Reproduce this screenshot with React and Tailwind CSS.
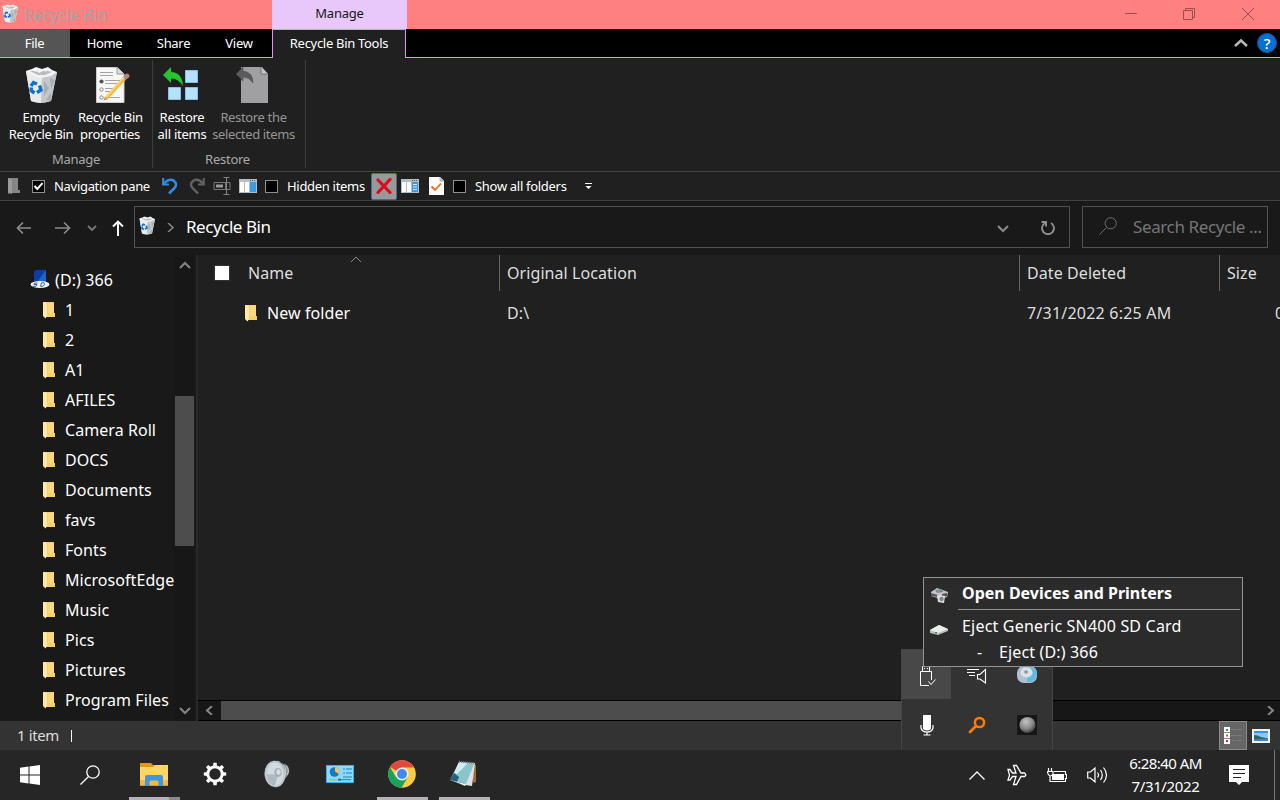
import React from 'react';

const folders = ['1', '2', 'A1', 'AFILES', 'Camera Roll', 'DOCS', 'Documents', 'favs', 'Fonts', 'MicrosoftEdge', 'Music', 'Pics', 'Pictures', 'Program Files'];

function BinIcon({ className }) {
  return (
    <svg className={className} viewBox="0 0 32 38" preserveAspectRatio="none">
      <path d="M1 5 L6 35 Q15 39 26 35 L32 6 Z" fill="#d5d8db" />
      <path d="M1 5 L6 35 L16 37 L17 11 Z" fill="#e9ebed" />
      <path d="M17 11 L16 37 L26 35 L32 6 Z" fill="#c3c7ca" />
      <path d="M19 15 L24 22 L19 30 Z M25 12 L30 14 L26 23 Z M21 34 L26 26 L26 35 Z" fill="#a9aeb2" />
      <path d="M1 5 L7 3 L11 1 L17 3 L23 1 L27 4 L32 6 L26 10 L16 12 L7 9 Z" fill="#f3f3f3" />
      <path d="M5 5 L11 4 L14 7 L20 4 L27 6 L20 9 L13 9 Z" fill="#b9bbbd" />
      <path d="M7 4 L11 3 L12 6 Z M18 3 L22 3 L21 6 Z" fill="#fff" />
      <g fill="none" stroke="#0c72d0" strokeWidth="3.4">
        <path d="M6 20 L8.5 16.5 L12 18" />
        <path d="M14.5 19.5 L16 24 L12 26.5" />
        <path d="M9.5 27 L6 24.5 L6.5 21.5" />
      </g>
    </svg>
  );
}

function FolderIcon({ className }) {
  return (
    <svg className={className} viewBox="0 0 13 18">
      <path d="M1 1 H12 V12 H13 V16 H3 L1 14 Z" fill="#f5d06c" />
      <path d="M1 1 L5 2 V15 L3.5 17.5 L1 15 Z" fill="#ffe9a9" />
      <path d="M6 2 H12 V12 H6 Z" fill="#fad97e" />
    </svg>
  );
}

function Chevron({ dir, className }) {
  const d = { up: 'M1 7 L6 2 L11 7', down: 'M1 2 L6 7 L11 2', left: 'M8 0 L3 4.5 L8 9', right: 'M4 0 L9 4.5 L4 9' }[dir];
  return (
    <svg className={className} viewBox="0 0 12 9" fill="none" stroke="currentColor">
      <path d={d} />
    </svg>
  );
}

function SearchIcon({ className }) {
  return (
    <svg className={className} viewBox="0 0 20 20" fill="none" stroke="currentColor">
      <circle cx="13" cy="7" r="6.2" />
      <path d="M8.5 11.5 L0.5 19.5" />
    </svg>
  );
}

function CheckBox({ checked }) {
  return (
    <div className="w-[13px] h-[13px] bg-black border border-[#8f8f8f] shrink-0">
      {checked && (
        <svg className="w-[11px] h-[11px] block" viewBox="0 0 11 11">
          <path d="M1.5 5 L4.3 8 L9.5 2.2" fill="none" stroke="#fff" strokeWidth="2" />
        </svg>
      )}
    </div>
  );
}

function TitleBar() {
  return (
    <div className="h-[29px] flex bg-[#ff8080] shrink-0">
      <div className="w-[272px] flex pl-[2px]">
        <BinIcon className="w-4 h-[19px] mt-1" />
        <span className="ml-[6px] text-[16px] leading-[30px] tracking-[-0.05px] text-[#a8a0a0]">Recycle Bin</span>
      </div>
      <div className="w-[135px] bg-[#e8c8fb] text-[#181818] text-[13px] leading-[27px] text-center tracking-[-0.2px]">Manage</div>
      <svg className="ml-auto w-[160px] h-[29px]" viewBox="0 0 160 29" fill="none" stroke="#9b4e4e">
        <path d="M5 13.5 H17" />
        <path d="M63.5 10.5 H72.5 V19.5 H63.5 Z M65.5 10 V8.5 H74.5 V17.5 H73" />
        <path d="M122 8 L134 20 M134 8 L122 20" />
      </svg>
    </div>
  );
}

function TabRow() {
  return (
    <div className="h-[29px] flex bg-black text-white text-[13px] leading-[28px] text-center shrink-0">
      <div className="w-[272px] flex border-b border-[#e391f5]">
        <div className="w-[69px] mr-px shadow-[1px_0_0_#555] bg-[#555] tracking-[-0.3px]">File</div>
        <div className="w-[69px] tracking-[-0.4px]">Home</div>
        <div className="w-[69px] tracking-[-0.3px]">Share</div>
        <div className="w-[62px] tracking-[-0.2px]">View</div>
      </div>
      <div className="w-[134px] bg-[#202020] border-x border-t border-[#e391f5] leading-[27px] tracking-[-0.3px]">Recycle Bin Tools</div>
      <div className="flex-1 flex items-center justify-end border-b border-[#e391f5]">
        <svg className="w-4 h-3 mr-[8px]" viewBox="0 0 16 12">
          <path d="M2 9 L8 3.5 L14 9" fill="none" stroke="#b8b8b8" strokeWidth="2.4" />
        </svg>
        <div className="w-5 h-5 mr-[3px] rounded-full bg-[#0a6fd0] border border-[#0957a5] text-[15px] leading-[18px] font-medium">?</div>
      </div>
    </div>
  );
}

function Ribbon() {
  return (
    <div className="h-[113px] flex bg-[#202020] text-[13px] leading-[17px] text-center text-white shrink-0">
      <div className="w-[153px] border-r border-[#3d3d3d] mt-[2px] mb-[3px]">
        <div className="flex h-[91px]">
          <div className="w-[74px] ml-1 pt-[6px]">
            <BinIcon className="w-8 h-[38px] mx-auto" />
            <div className="mt-[5px] tracking-[-0.38px]">Empty<br />Recycle Bin</div>
          </div>
          <div className="w-[64px] pt-[6px]">
            <svg className="w-9 h-[38px] ml-[17px]" viewBox="0 0 36 38">
              <path d="M1.5 1.5 H22 L29 8 V36.5 H1.5 Z" fill="#f7f7f7" stroke="#ccc" />
              <path d="M22 1 V8 H29" fill="#ddd" stroke="#999" />
              <g stroke="#a4a4a4"><path d="M5 6.5 H18 M5 9.5 H18 M10 14.5 H25 M10 17.5 H23 M10 22.5 H20 M10 25.5 H18 M10 31.5 H25" /></g>
              <circle cx="6.500" cy="15.500" r="2.100" fill="#555" />
              <circle cx="6.500" cy="23.500" r="1.700" fill="#fff" stroke="#888" />
              <circle cx="6.500" cy="31.500" r="1.700" fill="#fff" stroke="#888" />
              <path d="M10 31 L28 11 L31 13.500 L13 33 L8.500 34.500 Z" fill="#f6b73c" />
              <path d="M10 31 L28 11 L29.500 12 L11.500 32 Z" fill="#ffd96c" />
              <path d="M28 11 L30 8.500 L33.500 11.500 L31.500 13.500 Z" fill="#8e9aa8" />
              <path d="M29.500 9 Q31.500 6.500 33.500 8 Q35.500 10 33.500 12 Z" fill="#ed6a6a" />
              <path d="M10 31 L13 33 L8.500 34.500 Z" fill="#c69a76" />
            </svg>
            <div className="mt-[5px] tracking-[-0.35px]">Recycle Bin<br />properties</div>
          </div>
        </div>
        <div className="text-[#a9a9a9] leading-[16px] tracking-[-0.3px]">Manage</div>
      </div>
      <div className="w-[153px] border-r border-[#3d3d3d] mt-[2px] mb-[3px]">
        <div className="flex h-[91px]">
          <div className="w-[58px] pt-[6px]">
            <svg className="w-9 h-[38px] ml-[10px]" viewBox="0 0 36 38">
              <path d="M0 9 L8 1 V6 Q19 6 20 20 Q15 12 8 12.500 V17 Z" fill="#27c52d" />
              <g fill="#b5e1ff" stroke="#82c1ec">
                <path d="M22.500 4.500 H34.500 V16.500 H22.500 Z M5.500 21.500 H17.500 V33.500 H5.500 Z M22.500 21.500 H34.500 V33.500 H22.500 Z" />
              </g>
            </svg>
            <div className="mt-[5px] tracking-[-0.25px]">Restore<br />all items</div>
          </div>
          <div className="w-[85px] pt-[6px] text-[#969696]">
            <svg className="w-9 h-[38px] ml-[25px]" viewBox="0 0 36 38">
              <path d="M5 1 H26 L32 8 V37 H5 Z" fill="#a0a0a2" />
              <path d="M25 1 V8 H32" fill="#c5c5c5" stroke="#777" />
              <path d="M0 8 L7 1 V5 Q17 6 17 17 Q13 11 7 11 V15 Z" fill="#5b5b5b" stroke="#444" strokeWidth="0.500" />
            </svg>
            <div className="mt-[5px] tracking-[-0.35px]">Restore the<br />selected items</div>
          </div>
        </div>
        <div className="text-[#a9a9a9] leading-[16px] -ml-[3px] tracking-[-0.25px]">Restore</div>
      </div>
    </div>
  );
}

function QuickBar() {
  return (
    <div className="h-[30px] flex items-center bg-[#202020] border-y border-[#424242] text-white text-[13px] tracking-[-0.3px] shrink-0">
      <svg className="w-[13px] h-[18px] ml-[7px] mr-3" viewBox="0 0 13 18">
        <path d="M1 1 H11 V13 H13 V16 H4 L1 17 Z" fill="#858585" />
        <path d="M1 1 L5 3 V17 L1 15 Z" fill="#9b9b9b" />
      </svg>
      <CheckBox checked />
      <span className="w-[117px] pl-[9px] pt-px">Navigation pane</span>
      <svg className="w-4 h-[18px]" viewBox="0 0 16 18" fill="none" stroke="#318bdd">
        <path d="M2 6.500 Q7 1 11.500 3.500 Q16 7 12.500 11 L7 16.500" strokeWidth="2.600" />
        <path d="M1.200 1 V7.500 H7" strokeWidth="2.200" />
      </svg>
      <svg className="w-4 h-[18px] ml-[11px]" viewBox="0 0 16 18" fill="none" stroke="#626262">
        <path d="M14 6.500 Q9 1 4.500 3.500 Q0 7 3.500 11 L9 16.500" strokeWidth="2.400" />
        <path d="M14.800 1 V7.500 H9" strokeWidth="2" />
      </svg>
      <svg className="w-[18px] h-[18px] ml-[8px]" viewBox="0 0 18 18">
        <path d="M1 5.500 H12.500 V12.500 H1 Z M12.500 5.500 H17 V12.500 H12.500" fill="none" stroke="#777" />
        <path d="M3 7.500 H10 V10.500 H3 Z" fill="#999" />
        <path d="M10.500 0.500 H16.500 M10.500 17.500 H16.500 M13.500 1 V17" stroke="#858585" />
      </svg>
      <svg className="w-[18px] h-[14px] ml-2" viewBox="0 0 18 14">
        <path d="M0 0 H18 V14 H0 Z" fill="#b5bec5" />
        <path d="M1 3 H5 V13 H1 Z M6 3 H10 V13 H6 Z" fill="#fff" />
        <path d="M11 3 H17 V13 H11 Z" fill="#3b99e5" />
        <path d="M11 1.500 H17" stroke="#555" strokeDasharray="1 1" />
      </svg>
      <div className="ml-2"><CheckBox /></div>
      <span className="w-[93px] pl-[9px] pt-px">Hidden items</span>
      <div className="w-[26px] h-[27px] bg-[#999] border border-[#4a6a9a] rounded-[2px] flex items-center justify-center">
        <svg className="w-4 h-4" viewBox="0 0 16 16">
          <path d="M2 2 L14 14.500 M14 1.500 L2 14.500" stroke="#d90d1e" strokeWidth="3.200" strokeLinecap="round" />
        </svg>
      </div>
      <svg className="w-[18px] h-[14px] ml-1" viewBox="0 0 18 14">
        <path d="M0 0 H18 V14 H0 Z" fill="#b5bec5" />
        <path d="M1 3 H5 V13 H1 Z M6 3 H10 V13 H6 Z" fill="#fff" />
        <path d="M11 3 H17 V13 H11 Z" fill="#3b99e5" />
        <path d="M12 5.500 H16 M12 8 H16 M12 10.500 H16" stroke="#d8edff" />
        <path d="M11 1.500 H17" stroke="#555" strokeDasharray="1 1" />
      </svg>
      <svg className="w-[15px] h-[18px] ml-[10px]" viewBox="0 0 15 18">
        <path d="M0 0 H11 L15 4 V18 H0 Z" fill="#fafafa" />
        <path d="M11 0 V4 H15" fill="#ccc" stroke="#999" strokeWidth="0.700" />
        <path d="M2.500 9.500 L6 13 L12 6.500" fill="none" stroke="#f06b16" strokeWidth="1.800" />
      </svg>
      <div className="ml-[9px]"><CheckBox /></div>
      <span className="w-[119px] pl-[9px] pt-px">Show all folders</span>
      <svg className="w-[7px] h-[6px]" viewBox="0 0 7 6" fill="#fff">
        <path d="M0 0 H7 V1 H0 Z M0.500 3 H6.500 L3.500 6 Z" />
      </svg>
    </div>
  );
}

function AddressBar() {
  return (
    <div className="h-[54px] flex pt-[5px] shrink-0 bg-[#191919]">
      <div className="w-[134px] h-[42px] flex items-center pl-4 pt-[2px]">
        <svg className="w-[16px] h-[14px]" viewBox="0 0 16 14" fill="none" stroke="#8a8a8a" strokeWidth="1.700">
          <path d="M15 7 H1.500 M7 1.500 L1.500 7 L7 12.500" />
        </svg>
        <svg className="w-[16px] h-[14px] ml-[23px]" viewBox="0 0 16 14" fill="none" stroke="#8a8a8a" strokeWidth="1.700">
          <path d="M0 7 H14.500 M9 1.500 L14.500 7 L9 12.500" />
        </svg>
        <svg className="w-[10px] h-[7px] ml-[16px]" viewBox="0 0 10 7" fill="none" stroke="#777" strokeWidth="1.900">
          <path d="M1 1 L5 5 L9 1" />
        </svg>
        <svg className="w-[12px] h-[16px] ml-[15px]" viewBox="0 0 12 16" fill="none" stroke="#fff" strokeWidth="1.900">
          <path d="M6 16 V1.500 M1 6.500 L6 1.500 L11 6.500" />
        </svg>
      </div>
      <div className="w-[936px] h-[42px] flex items-center border border-[#535353]">
        <BinIcon className="w-4 h-[19px] ml-1 mb-[3px]" />
        <Chevron dir="right" className="w-3 h-[9px] ml-[9px] text-[#8a8a8a] stroke-[1.5]" />
        <span className="ml-[10px] text-[17px] tracking-[-0.45px] text-white">Recycle Bin</span>
        <svg className="w-3 h-2 ml-auto mt-1" viewBox="0 0 12 8" fill="none" stroke="#8a8a8a" strokeWidth="2">
          <path d="M1 1 L6 6 L11 1" />
        </svg>
        <svg className="w-4 h-4 ml-[31px] mr-[13px] mt-[2px]" viewBox="0 0 16 16" fill="none" stroke="#8e8e8e" strokeWidth="1.900">
          <path d="M5 3 A6 6 0 1 0 11 3" />
          <path d="M1.500 2 H6 V6.500" />
        </svg>
      </div>
      <div className="w-[186px] h-[42px] ml-3 flex items-center border border-[#535353] text-[#767676]">
        <SearchIcon className="w-[18px] h-[18px] ml-4 mb-[3px]" />
        <span className="ml-4 text-[17px] tracking-[-0.38px]">Search Recycle ...</span>
      </div>
    </div>
  );
}

function NavPane() {
  return (
    <div className="w-[198px] flex bg-[#191919] text-white text-[16px] border-r-2 border-[#292929] shrink-0">
      <div className="w-[175px] pt-[10px] overflow-hidden">
        <div className="h-[30px] flex items-center pl-[30px]">
          <svg className="w-5 h-[20px] -mt-[3px]" viewBox="0 0 20 20">
            <path d="M6 1 H16 V13 H4 V3 Z" fill="#0c3da5" />
            <path d="M16 1 V13 H7 Z" fill="#1769c7" />
            <ellipse cx="10" cy="15.500" rx="9.500" ry="3.400" fill="#eef2f7" />
            <path d="M7.500 14 H4.500 L4 15.500 H7 L6 17.300 H2.500 M11.500 13.800 L10.500 17.300 H13 Q15.500 15.500 14 13.800 Z" fill="none" stroke="#34548d" strokeWidth="0.900" />
          </svg>
          <span className="ml-[5px] tracking-[0.1px]">(D:) 366</span>
        </div>
        {folders.map((name) => (
          <div key={name} className="h-[30px] flex items-center pl-[42px]">
            <FolderIcon className="w-[13px] h-[18px] shrink-0" />
            <span className="ml-[10px] tracking-[0.06px]">{name}</span>
          </div>
        ))}
      </div>
      <div className="w-[19px] bg-[#171717] flex flex-col items-center text-[#858585]">
        <Chevron dir="up" className="w-3 h-[9px] mt-[6px] stroke-2" />
        <div className="w-[19px] h-[150px] mt-[126px] bg-[#4d4d4d]" />
        <Chevron dir="down" className="w-3 h-[9px] mt-auto mb-[6px] stroke-2" />
      </div>
    </div>
  );
}

function FileList() {
  return (
    <div className="flex-1 min-w-0 flex flex-col bg-[#202020] text-[16px] tracking-[0.08px] text-[#dedede] overflow-hidden">
      <div className="h-9 flex relative leading-[37px]">
        <div className="w-[302px] flex border-r border-[#636363]">
          <div className="w-4 h-4 mt-[10px] ml-[16px] bg-white border border-[#333]" />
          <span className="ml-[18px]">Name</span>
        </div>
        <Chevron dir="up" className="absolute left-[152px] top-0 w-3 h-[9px] text-[#8a8a8a]" />
        <div className="w-[520px] pl-[7px] border-r border-[#636363]">Original Location</div>
        <div className="w-[200px] pl-[7px] border-r border-[#636363]">Date Deleted</div>
        <div className="pl-[7px]">Size</div>
      </div>
      <div className="flex mt-[7px] leading-[30px]">
        <div className="w-[309px] pl-[46px] flex items-center text-white shrink-0">
          <FolderIcon className="w-[13px] h-[18px]" />
          <span className="ml-[10px]">New folder</span>
        </div>
        <div className="w-[520px] shrink-0">D:\</div>
        <div className="w-[248px] shrink-0 tracking-[0.22px]">7/31/2022 6:25 AM</div>
        <div className="shrink-0">0</div>
      </div>
      <div className="h-[21px] mt-auto flex items-center bg-[#171717] border-y border-black text-[#858585]">
        <Chevron dir="left" className="w-3 h-[9px] ml-[6px] stroke-2" />
        <div className="w-[690px] h-[19px] ml-[5px] bg-[#4d4d4d] mr-auto" />
        <Chevron dir="right" className="w-3 h-[9px] mr-[4px] stroke-2" />
      </div>
    </div>
  );
}

function StatusBar() {
  return (
    <div className="h-[29px] flex items-center bg-[#333] text-[15px] text-[#dedede] shrink-0">
      <span className="ml-[17px] w-[54px] tracking-[-0.4px]">1 item</span>
      <div className="w-px h-3 bg-white" />
      <div className="w-7 h-[29px] ml-auto bg-[#666] border border-[#8b8b8b] flex items-center justify-center">
        <svg className="w-[20px] h-[17px]" viewBox="0 0 20 17">
          <path d="M1 0 H7 V17 H1 Z" fill="#fff" />
          <path d="M1 5.500 H7 M1 11.500 H7" stroke="#888" />
          <path d="M3 2 H5 V4 H3 Z" fill="#268bcb" />
          <path d="M3 7.500 H5 V9.500 H3 Z" fill="#937b20" />
          <path d="M3 13 H5 V15 H3 Z" fill="#d32e2e" />
          <path d="M8 2.500 H13 M14 2.500 H19 M8 8.500 H13 M14 8.500 H19 M8 13.500 H13 M14 13.500 H19" stroke="#7b7b7b" />
        </svg>
      </div>
      <svg className="w-[18px] h-[14px] ml-[5px] mr-[10px]" viewBox="0 0 18 14">
        <path d="M0 0 H18 V14 H0 Z" fill="#f2f2f2" />
        <path d="M2 2 H16 V12 H2 Z" fill="#8cc8f3" />
        <path d="M2 2 H16 V4 H2 Z" fill="#3d93dd" />
        <path d="M2 6 Q6 6 9 8 L16 9.500 V10 H2 Z" fill="#306a68" />
        <path d="M2 10 H16 V12 H2 Z" fill="#3d86c2" />
      </svg>
    </div>
  );
}

function ChromeIcon() {
  return (
    <svg className="w-7 h-7" viewBox="0 0 28 28">
      <circle cx="14" cy="14" r="13.800" fill="#ffcd40" />
      <path d="M14 14 L2 7 A13.800 13.800 0 0 1 26 7.500 H14 Z" fill="#dd4b3e" />
      <path d="M2 7 A13.800 13.800 0 0 0 13.500 27.800 L19.500 17.500 L14 14 L8 17.200 Z" fill="#1aa15f" />
      <circle cx="14" cy="14" r="6.500" fill="#f1f1f1" />
      <circle cx="14" cy="14" r="5" fill="#4688f1" />
    </svg>
  );
}

function GearIcon() {
  const teeth = [0, 45, 90, 135, 180, 225, 270, 315];
  return (
    <svg className="w-[24px] h-[24px] mr-[2px]" viewBox="0 0 24 24">
      {teeth.map((a) => (
        <path key={a} d="M10 4.500 L10.400 0.800 H13.600 L14 4.500 Z" fill="#fff" transform={`rotate(${a} 12 12)`} />
      ))}
      <circle cx="12" cy="12" r="7.200" fill="none" stroke="#fff" strokeWidth="2.900" />
    </svg>
  );
}

function TaskButton({ children, running, grouped }) {
  return (
    <div className="w-[62px] h-[50px] flex flex-col items-center">
      <div className="h-[47px] pt-px flex items-center justify-center">{children}</div>
      {running && (
        <div className="w-[51px] h-[3px] flex bg-[#b6b1b6]">
          {grouped && <div className="w-[11px] h-[3px] ml-auto bg-[#8b888b]" />}
        </div>
      )}
    </div>
  );
}

function Taskbar() {
  return (
    <div className="h-[50px] flex items-center bg-[#262626] text-white shrink-0">
      <svg className="w-5 h-5 ml-5 mr-[28px]" viewBox="0 0 20 20" fill="#fff">
        <path d="M0 2.800 L8.500 1.600 V9.500 H0 Z M9.500 1.500 L20 0 V9.500 H9.500 Z M0 10.500 H8.500 V18.400 L0 17.200 Z M9.500 10.500 H20 V20 L9.500 18.500 Z" />
      </svg>
      <div className="w-[55px] ml-[12px]"><SearchIcon className="w-5 h-5 stroke-[1.3]" /></div>
      <div className="flex -ml-[12px]">
        <TaskButton running grouped>
          <svg className="w-7 h-[23px]" viewBox="0 0 28 23">
            <path d="M0 0 H11 L13 2 H28 V4 H0 Z" fill="#df9b0b" />
            <path d="M0 4 H13 L15 2 H28 V22.500 H0 Z" fill="#ffd568" />
            <path d="M0 17 H28 V22.500 H0 Z" fill="#f4b942" />
            <path d="M5 23 V14 Q5 12 7 12 H21 Q23 12 23 14 V23 H18.500 V19 Q18.500 17.500 17 17.500 H11 Q9.500 17.500 9.500 19 V23 Z" fill="#3e98e0" />
          </svg>
        </TaskButton>
        <TaskButton><GearIcon /></TaskButton>
        <TaskButton>
          <svg className="w-7 h-7 mr-[2px]" viewBox="0 0 28 28">
            <path d="M13 1 Q17 0 18 3 L24 5 Q28 10 25 15 L17 25 L11 27 Z" fill="#899197" />
            <ellipse cx="12" cy="14" rx="10.500" ry="13.300" fill="#bdc7cf" transform="rotate(-5 11.500 14)" />
            <ellipse cx="12" cy="14" rx="8.500" ry="11.500" fill="#d3dade" />
            <path d="M4 14 Q4 25 12 25.500 L15 15 Z" fill="#aebac2" />
            <ellipse cx="15" cy="12.500" rx="3.600" ry="4.500" fill="#a7b0b7" />
            <ellipse cx="15.500" cy="12" rx="2.100" ry="2.800" fill="#d6dce0" />
            <path d="M20 5 Q25 9 21 18 M23 6 Q27 10 24 15" fill="none" stroke="#c3cbd0" />
          </svg>
        </TaskButton>
        <TaskButton>
          <svg className="w-7 h-[18px]" viewBox="0 0 28 18">
            <path d="M0 0 H28 V18 H0 Z" fill="#3bb1e9" />
            <path d="M1 1 H27 V17 H1 Z" fill="#8bd9ff" />
            <circle cx="8.500" cy="7" r="4.800" fill="#1879c2" />
            <path d="M9 6.500 V2 A5 5 0 0 1 13 9 Z" fill="#f9c849" />
            <path d="M17 4 H19 M20 4 H26 M17 8 H19 M20 8 H26 M17 12 H26 M15 14.700 H25" stroke="#277eb3" />
            <path d="M3 14.700 H11" stroke="#eaa921" strokeWidth="1.300" />
            <path d="M12 14.700 H15" stroke="#1879c2" strokeWidth="2" />
          </svg>
        </TaskButton>
        <TaskButton running><ChromeIcon /></TaskButton>
        <TaskButton running>
          <svg className="w-[28px] h-7" viewBox="0 0 28 28">
            <path d="M22 3 L26 5 V22 L23 23 Z" fill="#a66c36" />
            <path d="M9 2 L25 3 L22 26 L15 25 Z" fill="#dbe3e4" />
            <path d="M9 2 L24 4 L16 24 L0 20 Z" fill="#8ac4cd" />
            <path d="M9 2 L18 3 L7 14 L4 13 Z" fill="#d2edef" />
            <path d="M0 20 L4 13 L9 17 L7 22 Z" fill="#266473" />
            <path d="M0 20 L16 24 L15 26 L8 23 Z" fill="#e7f1f2" />
            <path d="M9 1.500 L25 3.500" stroke="#777" strokeWidth="2" strokeDasharray="1 1" />
          </svg>
        </TaskButton>
      </div>
      <div className="ml-auto flex items-center">
        <svg className="w-4 h-[9px] mr-[22px]" viewBox="0 0 16 9" fill="none" stroke="#fff" strokeWidth="1.300">
          <path d="M0.500 8.500 L8 1 L15.500 8.500" />
        </svg>
        <svg className="w-5 h-[22px] mr-[20px]" viewBox="0 0 20 22" fill="none" stroke="#fff" strokeWidth="1.300">
          <path d="M1 5.500 H3 L5.500 9 H9 L6.500 1.500 H9.500 L14 9 H17.500 Q20 11 17.500 12.500 H14 L9.500 20.500 H6.500 L9 12.500 H5.500 L3 16 H1 L2.500 11 Z" />
        </svg>
        <svg className="w-5 h-4 mr-[20px]" viewBox="0 0 20 16" fill="none" stroke="#fff">
          <path d="M1.500 1 V4 M4.500 1 V4 M0 4.500 H6 V7 Q5 9 3 9 Q0.500 8 0.500 4.500 M3 9 V14.500 H18.500 V11.500 H19.500 V7.500 H18.500 V4.500 H7" strokeWidth="1.200" />
          <path d="M5 7 H17 V13 H5 Z" fill="#fff" stroke="none" />
        </svg>
        <svg className="w-[21px] h-[18px] mr-[20px]" viewBox="0 0 21 18" fill="none" stroke="#fff" strokeWidth="1.200">
          <path d="M0.700 6 H3.500 L8 2 V16 L3.500 12 H0.700 Z" />
          <path d="M10.500 6.500 Q12.500 9 10.500 11.500 M13.500 4 Q17 9 13.500 14 M16.500 1.500 Q22.500 9 16.500 16.500" />
        </svg>
        <div className="w-[75px] text-[15px] leading-[23px] text-center tracking-[-0.55px] mb-px">6:28:40 AM<br /><span className="tracking-[-0.35px]">7/31/2022</span></div>
        <svg className="w-5 h-5 ml-[26px]" viewBox="0 0 20 20">
          <path d="M0 0 H20 V17 H13 L10 20 L7 17 H0 Z" fill="#fff" />
          <path d="M4 4.500 H16 M4 8.500 H16 M4 12.500 H12" stroke="#262626" strokeWidth="1.200" />
        </svg>
        <div className="w-px h-[50px] ml-[25px] mr-[5px] bg-[#777]" />
      </div>
    </div>
  );
}

function TrayFlyout() {
  return (
    <div className="absolute left-[901px] top-[649px] w-[152px] h-[101px] border border-b-0 border-[#454545] bg-[#333] grid grid-cols-3 grid-rows-2">
      <div className="bg-[#484848] w-[49px] h-[49px] flex items-center justify-center">
        <svg className="w-4 h-5 mt-[3px] ml-[3px]" viewBox="0 0 16 20" fill="none" stroke="#fff">
          <path d="M2.500 5 V0.500 H9.500 V5 M4.500 2 V3 M7.500 2 V3 M0.500 5.500 H11.500 V14 M0.500 5.500 V19.500 H9 M8.500 15.500 L11 18.500 L15.500 13.500" />
        </svg>
      </div>
      <div className="flex items-center justify-center">
        <svg className="w-5 h-4 mt-[2px]" viewBox="0 0 20 16" fill="none" stroke="#fff" strokeWidth="1.100">
          <path d="M0 1.500 H12 M0 4.500 H8 M2 7.500 H8 M10.500 6.500 H13 L18.500 1.500 V15 L13 11 H10.500 Z" />
        </svg>
      </div>
      <div className="flex items-center justify-center">
        <svg className="w-5 h-5" viewBox="0 0 20 20">
          <rect x="0" y="1" width="20" height="17" rx="7" fill="#aec1ce" />
          <path d="M10 3 Q20 1 20 9 Q19 18 10 17 Z" fill="#62b9e4" />
          <ellipse cx="9.500" cy="7.500" rx="6" ry="5" fill="#dbe2e6" />
          <circle cx="9" cy="7" r="1.800" fill="#8b9499" />
        </svg>
      </div>
      <div className="flex items-center justify-center">
        <svg className="w-[14px] h-[21px]" viewBox="0 0 14 21" fill="none" stroke="#fff" strokeWidth="1.200">
          <path d="M3 0 H11 V14 Q7 17 3 14 Z" fill="#fff" stroke="none" />
          <path d="M1 10 V13 Q2 17 7 17 Q12 17 13 13 V10 M7 17 V20 M3.500 20 H10.500" />
        </svg>
      </div>
      <div className="flex items-center justify-center">
        <svg className="w-[18px] h-[18px]" viewBox="0 0 18 18" fill="none" stroke="#ff7b00">
          <circle cx="11.500" cy="6.500" r="4.600" strokeWidth="2.500" />
          <path d="M8 10 L2 16" strokeWidth="2.800" strokeLinecap="round" />
        </svg>
      </div>
      <div className="flex items-center justify-center">
        <svg className="w-5 h-5" viewBox="0 0 20 20">
          <defs>
            <radialGradient id="ball" cx="0.4" cy="0.3" r="0.75">
              <stop offset="0" stopColor="#c4c4c4" />
              <stop offset="0.6" stopColor="#858585" />
              <stop offset="1" stopColor="#333" />
            </radialGradient>
          </defs>
          <path d="M0 0 H20 V20 H0 Z" fill="#161616" />
          <circle cx="10.500" cy="10" r="8" fill="url(#ball)" />
        </svg>
      </div>
    </div>
  );
}

function EjectMenu() {
  return (
    <div className="absolute left-[923px] top-[577px] w-[320px] h-[90px] border border-[#929292] bg-[#2b2b2b] text-white text-[16px]">
      <div className="flex items-center h-[31px] pl-[7px]">
        <svg className="w-[17px] h-[16px] mt-[5px]" viewBox="0 0 17 16">
          <path d="M0 4 L6 0 L17 4 L16 9 L10 11 L0 8 Z" fill="#c5c5c5" />
          <path d="M4 2 L11 1 L12 4 L6 5 Z" fill="#79868d" />
          <path d="M0 5 L7 7 V9 L0 8 Z M11 6 L16 5 V8 L11 10 Z" fill="#555" />
          <path d="M6 7 L14 8 L13 15 L7 14 Z" fill="#e3e3e3" />
          <circle cx="10.500" cy="11" r="2.200" fill="#77858c" />
          <circle cx="7.500" cy="2.800" r="0.900" fill="#45b4dd" />
        </svg>
        <span className="ml-[14px] mb-[2px] font-bold">Open Devices and Printers</span>
      </div>
      <div className="h-px bg-[#929292] ml-[34px] mr-[2px]" />
      <div className="flex items-center h-[32px] pl-[6px]">
        <svg className="w-[18px] h-[10px] mt-[7px]" viewBox="0 0 18 10">
          <path d="M0 5 L9 0 L18 4 V6 L8 10 L0 8 Z" fill="#bcbcbc" />
          <path d="M0 5 L9 0 L18 4 L8 8 Z" fill="#ececec" />
          <path d="M5 7 H7 V8.500 H5 Z" fill="#388740" />
        </svg>
        <span className="ml-[14px] tracking-[0.2px]">Eject Generic SN400 SD Card</span>
      </div>
      <div className="flex items-center h-[20px] pl-[53px]">
        <span className="w-[22px]">-</span>
        <span className="tracking-[0.15px]">Eject (D:) 366</span>
      </div>
    </div>
  );
}

export default function App() {
  return (
    <div className="relative w-[1280px] h-[800px] overflow-hidden flex flex-col bg-[#191919] whitespace-nowrap font-['Noto_Sans','Open_Sans',sans-serif]">
      <TitleBar />
      <TabRow />
      <Ribbon />
      <QuickBar />
      <AddressBar />
      <div className="flex-1 flex min-h-0">
        <NavPane />
        <FileList />
      </div>
      <StatusBar />
      <Taskbar />
      <TrayFlyout />
      <EjectMenu />
    </div>
  );
}
